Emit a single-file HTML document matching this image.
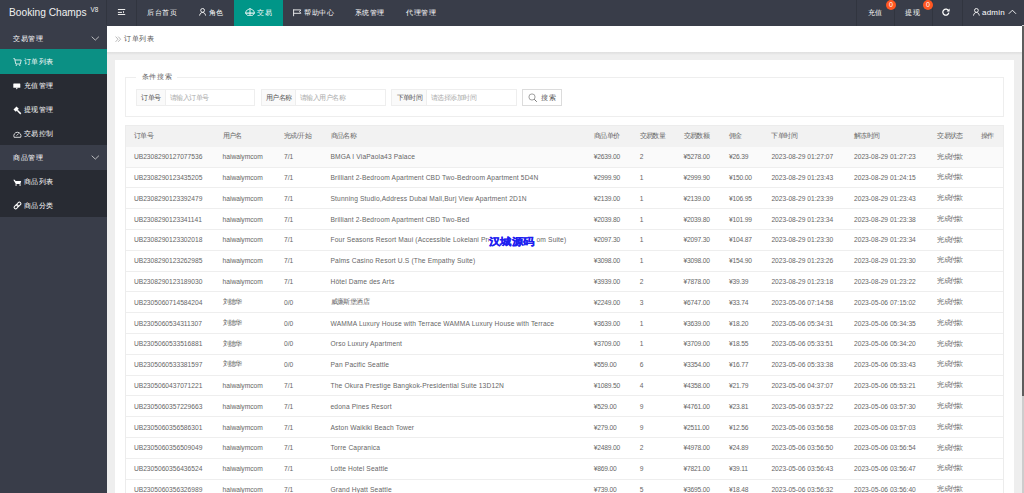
<!DOCTYPE html>
<html><head><meta charset="utf-8"><style>
*{margin:0;padding:0;box-sizing:border-box}
html,body{width:1024px;height:493px;overflow:hidden}
body{position:relative;background:#eeeeee;font-family:"Liberation Sans",sans-serif;}
.a{position:absolute}
.t{position:absolute;white-space:nowrap;line-height:12px;margin-top:-6px}
.hdr{left:0;top:0;width:1024px;height:25.8px;background:#393D49}
.logo{left:9px;top:13.2px;font-size:10.2px;color:#f0f0f0}
.logo sup{font-size:6.4px;position:relative;top:-3.2px;margin-left:3.8px;vertical-align:top}
.vsep{position:absolute;top:0;width:1px;height:25.8px;background:rgba(0,0,0,0.13)}
.nav{font-size:7px;letter-spacing:0.55px;color:#fff;top:13.2px}
.navact{left:234px;top:0;width:49px;height:25.8px;background:#009688}
.badge{position:absolute;width:10px;height:10px;border-radius:50%;background:#FF5722;color:#fff;font-size:7px;line-height:10px;text-align:center}
.side{left:0;top:25px;width:107px;height:468px;background:#393D49}
.child{left:0;width:107px;background:#282B33}
.sact{left:0;top:49px;width:107px;height:24.5px;background:#0b9084}
.sn{font-size:7px;letter-spacing:0.5px;color:#fff}
.crumb{left:107px;top:25.8px;width:915px;height:26px;background:#fff}
.crumbsh{left:107px;top:51.8px;width:915px;height:3px;background:linear-gradient(#e0e0e0,#e3e3e3 40%,#eeeeee)}
.card{left:115px;top:60px;width:899px;height:440px;background:#fff}
.fs{left:125.2px;top:77px;width:878.5px;height:40px;border:1px solid #eeeeee}
.grp{position:absolute;top:89px;height:16.5px;border:1px solid #eeeeee;background:#fff}
.glab{position:absolute;left:0;top:0;bottom:0;background:#fafafa;border-right:1px solid #eeeeee}
.tbl{position:absolute;left:125.2px;width:878.6px;border:1px solid #ececec;background:#fff}
.thead{position:absolute;left:126.2px;width:876.6px;background:#f2f2f2}
.tr{position:absolute;left:126.2px;width:876.6px;border-bottom:1px solid #eeeeee}
.tr.first{background:#fafafa}
.th{position:absolute;white-space:nowrap;font-size:7px;letter-spacing:-0.6px;color:#666;line-height:10px;margin-top:-5px}
.td{position:absolute;white-space:nowrap;font-size:6.67px;color:#666;line-height:10px;margin-top:-5px}
.sb{left:1022px;top:25px;width:2px;height:468px;background:#cdcdcd}
.sbt{left:1022px;top:26px;width:2px;height:370px;background:#5d5d5d}
.wm{background:#fff;transform:scaleY(0.88);left:488.5px;top:240.8px;font-size:11px;letter-spacing:0.6px;font-weight:bold;-webkit-text-stroke:0.4px #1f1ff0;color:#1f1ff0;line-height:14px;margin-top:-7px;white-space:nowrap;position:absolute}

.cj7{font-size:7px;letter-spacing:0.6px}
.lab{font-size:7px;letter-spacing:-0.6px;color:#555}
.ph{font-size:7px;letter-spacing:-0.55px;color:#aaa}
.st{font-size:7px;letter-spacing:-0.6px;position:relative;top:-0.8px}

</style></head><body>
<div class="a hdr"></div>
<div class="t logo">Booking Champs<sup>V8</sup></div>
<div class="vsep" style="left:105.8px"></div>
<div class="vsep" style="left:136px"></div>
<div class="a navact"></div>
<!-- hamburger --><svg class="a" style="left:117px;top:8px" width="10" height="8" viewBox="0 0 10 8"><rect x="0.9" y="1.05" width="7.3" height="0.95" fill="#f4f4f4"/><rect x="0.9" y="3.9" width="4.1" height="0.95" fill="#f4f4f4"/><rect x="6" y="3.1" width="0.9" height="2" fill="#e8e8e8"/><rect x="0.9" y="6.05" width="7.3" height="0.95" fill="#f4f4f4"/></svg>
<div class="t nav" style="left:147px">后台首页</div>
<svg class="a" style="left:198.5px;top:8px" width="8" height="8" viewBox="0 0 8 8"><circle cx="3.6" cy="2.4" r="1.9" fill="none" stroke="#fff" stroke-width="0.9"/><path d="M0.6 7.6 C1 5.3 2.2 4.5 3.6 4.5 C5 4.5 6.2 5.3 6.6 7.6" fill="none" stroke="#fff" stroke-width="0.9"/></svg>
<div class="t nav" style="left:208.5px">角色</div>
<svg class="a" style="left:244.6px;top:8px" width="10" height="8" viewBox="0 0 10 8"><path d="M5 0.5 L8.6 2.6 L9.5 5 L7.6 7.4 H2.4 L0.5 5 L1.4 2.6 Z" fill="none" stroke="#fff" stroke-width="0.8"/><path d="M0.5 5.1 H9.5" stroke="#fff" stroke-width="1.1"/><path d="M5 0.5 V7.4" stroke="#fff" stroke-width="0.9"/></svg>
<div class="t nav" style="left:257px">交易</div>
<svg class="a" style="left:293px;top:8.5px" width="9" height="8" viewBox="0 0 9 8"><path d="M0.6 0.3 V7.2 M0.6 0.9 H7.8 L6.6 2.6 L7.8 4.3 H0.6" fill="none" stroke="#fff" stroke-width="0.85"/></svg>
<div class="t nav" style="left:304px">帮助中心</div>
<div class="t nav" style="left:354.7px">系统管理</div>
<div class="t nav" style="left:406px">代理管理</div>
<div class="vsep" style="left:856px"></div>
<div class="vsep" style="left:894px"></div>
<div class="vsep" style="left:931.5px"></div>
<div class="vsep" style="left:961.5px"></div>
<div class="t nav" style="left:867.5px">充值</div>
<div class="badge" style="left:886px;top:0px">0</div>
<div class="t nav" style="left:905px">提现</div>
<div class="badge" style="left:923px;top:0px">0</div>
<svg class="a" style="left:942px;top:7.9px" width="8" height="8" viewBox="0 0 8 8"><path d="M6.6 3 A3 3 0 1 0 6.8 4.6" fill="none" stroke="#fff" stroke-width="1.3"/><path d="M7.6 0.6 V3.6 H4.6 Z" fill="#fff"/></svg>
<svg class="a" style="left:972.5px;top:8px" width="8" height="8" viewBox="0 0 8 8"><circle cx="3.4" cy="2.4" r="1.9" fill="none" stroke="#fff" stroke-width="0.9"/><path d="M0.5 7.6 C0.9 5.3 2 4.5 3.4 4.5 C4.8 4.5 5.9 5.3 6.3 7.6" fill="none" stroke="#fff" stroke-width="0.9"/></svg>
<div class="t nav" style="left:982px;font-size:8px;letter-spacing:0.2px">admin</div>
<svg class="a" style="left:1008.3px;top:8.8px" width="9" height="6" viewBox="0 0 9 6"><path d="M0.8 4.8 L4.4 1.2 L8 4.8" fill="none" stroke="#fff" stroke-width="0.9"/></svg>

<div class="a side"></div>
<div class="a child" style="top:73px;height:72.3px"></div>
<div class="a child" style="top:169.6px;height:47px"></div>
<div class="a sact"></div>
<div class="t sn" style="left:13.4px;top:38.5px">交易管理</div>
<svg class="a" style="left:91px;top:35.5px" width="9" height="5" viewBox="0 0 9 5"><path d="M0.7 0.7 L4.3 4.1 L7.9 0.7" fill="none" stroke="#ddd" stroke-width="0.8"/></svg>
<div class="t sn" style="left:23.7px;top:62px">订单列表</div>
<div class="t sn" style="left:23.7px;top:86px">充值管理</div>
<div class="t sn" style="left:23.7px;top:110px">提现管理</div>
<div class="t sn" style="left:23.7px;top:134px">交易控制</div>
<div class="t sn" style="left:13.4px;top:158px">商品管理</div>
<svg class="a" style="left:91px;top:155px" width="9" height="5" viewBox="0 0 9 5"><path d="M0.7 0.7 L4.3 4.1 L7.9 0.7" fill="none" stroke="#ddd" stroke-width="0.8"/></svg>
<div class="t sn" style="left:23.7px;top:182px">商品列表</div>
<div class="t sn" style="left:23.7px;top:206px">商品分类</div>
<!-- sidebar icons -->
<svg class="a" style="left:12.5px;top:58px" width="9" height="8" viewBox="0 0 9 8"><path d="M0.4 0.6 H1.6 L2.8 6 H7.3 L8.2 2 H2" fill="none" stroke="#fff" stroke-width="0.8"/><circle cx="3.3" cy="7.2" r="0.6" fill="#fff"/><circle cx="6.8" cy="7.2" r="0.6" fill="#fff"/></svg>
<svg class="a" style="left:13px;top:82.5px" width="8" height="7" viewBox="0 0 8 7"><rect x="0.3" y="0.5" width="7" height="4.3" rx="0.5" fill="#fff"/><path d="M2.8 4.8 L3.8 6.6 L4.8 4.8 Z" fill="#fff"/></svg>
<svg class="a" style="left:12.5px;top:105.5px" width="9" height="9" viewBox="0 0 9 9"><path d="M0.5 3.5 L3.5 0.5 L5.8 2.8 L2.8 5.8 Z" fill="#fff"/><path d="M4.2 4.3 L7.8 7.9" stroke="#fff" stroke-width="1.5"/></svg>
<svg class="a" style="left:12.5px;top:130px" width="9" height="8" viewBox="0 0 9 8"><path d="M1.1 7.3 A3.6 3.6 0 1 1 7.7 7.3 Z" fill="none" stroke="#fff" stroke-width="0.8"/><path d="M3.6 5.6 L5.8 3.4" stroke="#fff" stroke-width="0.8"/></svg>
<svg class="a" style="left:12.5px;top:178.5px" width="9" height="8" viewBox="0 0 9 8"><path d="M0.3 0.7 H1.8 L2.6 2 H8.2 L7.4 5 H2.8 Z" fill="#fff"/><rect x="2.6" y="5" width="0.9" height="2" fill="#fff"/><rect x="6.6" y="5" width="0.9" height="2" fill="#fff"/></svg>
<svg class="a" style="left:12.5px;top:201.3px" width="9" height="9" viewBox="0 0 9 9"><g transform="rotate(-45 4.5 4.5)" fill="none" stroke="#fff" stroke-width="1"><rect x="0.4" y="3" width="4.6" height="3" rx="1.5"/><rect x="4" y="3" width="4.6" height="3" rx="1.5"/></g></svg>

<div class="a crumb"></div><div class="a crumbsh"></div>
<svg class="a" style="left:114.5px;top:36px" width="7" height="7" viewBox="0 0 7 7"><path d="M0.6 0.6 L3 3.2 L0.6 5.8 M3.2 0.6 L5.6 3.2 L3.2 5.8" fill="none" stroke="#999" stroke-width="0.7"/></svg>
<div class="t cj7" style="left:124px;top:38.9px;color:#555">订单列表</div>
<div class="a card"></div>
<div class="a fs"></div>
<div class="a" style="left:136.4px;top:72px;width:40.8px;height:10px;background:#fff"></div>
<div class="t cj7" style="left:141.9px;top:77.2px;color:#666">条件搜索</div>

<div class="grp" style="left:136.4px;width:118.8px"><div class="glab" style="width:29px"></div></div>
<div class="t lab" style="left:141.3px;top:98.1px">订单号</div>
<div class="t ph" style="left:170px;top:98.1px">请输入订单号</div>
<div class="grp" style="left:261.1px;width:124.5px"><div class="glab" style="width:34.4px"></div></div>
<div class="t lab" style="left:265.8px;top:98.1px">用户名称</div>
<div class="t ph" style="left:300px;top:98.1px">请输入用户名称</div>
<div class="grp" style="left:391.4px;width:125.6px"><div class="glab" style="width:35px"></div></div>
<div class="t lab" style="left:396.7px;top:98.1px">下单时间</div>
<div class="t ph" style="left:430.9px;top:98.1px">请选择添加时间</div>
<div class="grp" style="left:522.3px;width:39.8px;border-color:#dcdcdc"></div>
<svg class="a" style="left:528px;top:92.5px" width="10" height="10" viewBox="0 0 10 10"><circle cx="4" cy="4" r="3.1" fill="none" stroke="#888" stroke-width="0.8"/><path d="M6.2 6.2 L8.8 8.8" stroke="#777" stroke-width="1"/></svg>
<div class="t" style="left:541px;top:98px;font-size:7px;color:#555;letter-spacing:1px">搜索</div>

<div class="tbl" style="top:125.40px;height:372.60px"></div>
<div class="thead" style="top:126.40px;height:20.50px"></div>
<div class="th" style="left:133.90px;top:135.75px">订单号</div>
<div class="th" style="left:222.50px;top:135.75px">用户名</div>
<div class="th" style="left:284.00px;top:135.75px">完成/开始</div>
<div class="th" style="left:330.50px;top:135.75px">商品名称</div>
<div class="th" style="left:593.80px;top:135.75px">商品单价</div>
<div class="th" style="left:639.70px;top:135.75px">交易数量</div>
<div class="th" style="left:683.60px;top:135.75px">交易数额</div>
<div class="th" style="left:729.10px;top:135.75px">佣金</div>
<div class="th" style="left:771.40px;top:135.75px">下单时间</div>
<div class="th" style="left:854.00px;top:135.75px">解冻时间</div>
<div class="th" style="left:937.30px;top:135.75px">交易状态</div>
<div class="th" style="left:980.60px;top:135.75px">操作</div>
<div class="tr first" style="top:146.90px;height:20.79px"></div>
<div class="td" style="left:133.90px;top:157.30px">UB2308290127077536</div>
<div class="td" style="left:222.50px;top:157.30px">haiwaiymcom</div>
<div class="td" style="left:284.00px;top:157.30px">7/1</div>
<div class="td" style="left:330.50px;top:157.30px;letter-spacing:0.15px">BMGA I ViaPaola43 Palace</div>
<div class="td" style="left:593.80px;top:157.30px;letter-spacing:-0.2px">¥2639.00</div>
<div class="td" style="left:639.70px;top:157.30px">2</div>
<div class="td" style="left:683.60px;top:157.30px;letter-spacing:-0.2px">¥5278.00</div>
<div class="td" style="left:729.10px;top:157.30px;letter-spacing:-0.2px">¥26.39</div>
<div class="td" style="left:771.40px;top:157.30px">2023-08-29 01:27:07</div>
<div class="td" style="left:854.00px;top:157.30px">2023-08-29 01:27:23</div>
<div class="td" style="left:937.30px;top:157.30px"><span class="st">完成付款</span></div>
<div class="tr" style="top:167.69px;height:20.79px"></div>
<div class="td" style="left:133.90px;top:178.09px">UB2308290123435205</div>
<div class="td" style="left:222.50px;top:178.09px">haiwaiymcom</div>
<div class="td" style="left:284.00px;top:178.09px">7/1</div>
<div class="td" style="left:330.50px;top:178.09px;letter-spacing:0.15px">Brilliant 2-Bedroom Apartment CBD Two-Bedroom Apartment 5D4N</div>
<div class="td" style="left:593.80px;top:178.09px;letter-spacing:-0.2px">¥2999.90</div>
<div class="td" style="left:639.70px;top:178.09px">1</div>
<div class="td" style="left:683.60px;top:178.09px;letter-spacing:-0.2px">¥2999.90</div>
<div class="td" style="left:729.10px;top:178.09px;letter-spacing:-0.2px">¥150.00</div>
<div class="td" style="left:771.40px;top:178.09px">2023-08-29 01:23:43</div>
<div class="td" style="left:854.00px;top:178.09px">2023-08-29 01:24:15</div>
<div class="td" style="left:937.30px;top:178.09px"><span class="st">完成付款</span></div>
<div class="tr" style="top:188.48px;height:20.79px"></div>
<div class="td" style="left:133.90px;top:198.88px">UB2308290123392479</div>
<div class="td" style="left:222.50px;top:198.88px">haiwaiymcom</div>
<div class="td" style="left:284.00px;top:198.88px">7/1</div>
<div class="td" style="left:330.50px;top:198.88px;letter-spacing:0.15px">Stunning Studio,Address Dubai Mall,Burj View Apartment 2D1N</div>
<div class="td" style="left:593.80px;top:198.88px;letter-spacing:-0.2px">¥2139.00</div>
<div class="td" style="left:639.70px;top:198.88px">1</div>
<div class="td" style="left:683.60px;top:198.88px;letter-spacing:-0.2px">¥2139.00</div>
<div class="td" style="left:729.10px;top:198.88px;letter-spacing:-0.2px">¥106.95</div>
<div class="td" style="left:771.40px;top:198.88px">2023-08-29 01:23:39</div>
<div class="td" style="left:854.00px;top:198.88px">2023-08-29 01:23:43</div>
<div class="td" style="left:937.30px;top:198.88px"><span class="st">完成付款</span></div>
<div class="tr" style="top:209.27px;height:20.79px"></div>
<div class="td" style="left:133.90px;top:219.66px">UB2308290123341141</div>
<div class="td" style="left:222.50px;top:219.66px">haiwaiymcom</div>
<div class="td" style="left:284.00px;top:219.66px">7/1</div>
<div class="td" style="left:330.50px;top:219.66px;letter-spacing:0.15px">Brilliant 2-Bedroom Apartment CBD Two-Bed</div>
<div class="td" style="left:593.80px;top:219.66px;letter-spacing:-0.2px">¥2039.80</div>
<div class="td" style="left:639.70px;top:219.66px">1</div>
<div class="td" style="left:683.60px;top:219.66px;letter-spacing:-0.2px">¥2039.80</div>
<div class="td" style="left:729.10px;top:219.66px;letter-spacing:-0.2px">¥101.99</div>
<div class="td" style="left:771.40px;top:219.66px">2023-08-29 01:23:34</div>
<div class="td" style="left:854.00px;top:219.66px">2023-08-29 01:23:38</div>
<div class="td" style="left:937.30px;top:219.66px"><span class="st">完成付款</span></div>
<div class="tr" style="top:230.06px;height:20.79px"></div>
<div class="td" style="left:133.90px;top:240.45px">UB2308290123302018</div>
<div class="td" style="left:222.50px;top:240.45px">haiwaiymcom</div>
<div class="td" style="left:284.00px;top:240.45px">7/1</div>
<div class="td" style="left:330.50px;top:240.45px;letter-spacing:0.15px">Four Seasons Resort Maui (Accessible Lokelani Presi</div>
<div class="td" style="left:593.80px;top:240.45px;letter-spacing:-0.2px">¥2097.30</div>
<div class="td" style="left:639.70px;top:240.45px">1</div>
<div class="td" style="left:683.60px;top:240.45px;letter-spacing:-0.2px">¥2097.30</div>
<div class="td" style="left:729.10px;top:240.45px;letter-spacing:-0.2px">¥104.87</div>
<div class="td" style="left:771.40px;top:240.45px">2023-08-29 01:23:30</div>
<div class="td" style="left:854.00px;top:240.45px">2023-08-29 01:23:34</div>
<div class="td" style="left:937.30px;top:240.45px"><span class="st">完成付款</span></div>
<div class="tr" style="top:250.85px;height:20.79px"></div>
<div class="td" style="left:133.90px;top:261.24px">UB2308290123262985</div>
<div class="td" style="left:222.50px;top:261.24px">haiwaiymcom</div>
<div class="td" style="left:284.00px;top:261.24px">7/1</div>
<div class="td" style="left:330.50px;top:261.24px;letter-spacing:0.15px">Palms Casino Resort U.S (The Empathy Suite)</div>
<div class="td" style="left:593.80px;top:261.24px;letter-spacing:-0.2px">¥3098.00</div>
<div class="td" style="left:639.70px;top:261.24px">1</div>
<div class="td" style="left:683.60px;top:261.24px;letter-spacing:-0.2px">¥3098.00</div>
<div class="td" style="left:729.10px;top:261.24px;letter-spacing:-0.2px">¥154.90</div>
<div class="td" style="left:771.40px;top:261.24px">2023-08-29 01:23:26</div>
<div class="td" style="left:854.00px;top:261.24px">2023-08-29 01:23:30</div>
<div class="td" style="left:937.30px;top:261.24px"><span class="st">完成付款</span></div>
<div class="tr" style="top:271.64px;height:20.79px"></div>
<div class="td" style="left:133.90px;top:282.03px">UB2308290123189030</div>
<div class="td" style="left:222.50px;top:282.03px">haiwaiymcom</div>
<div class="td" style="left:284.00px;top:282.03px">7/1</div>
<div class="td" style="left:330.50px;top:282.03px;letter-spacing:0.15px">Hôtel Dame des Arts</div>
<div class="td" style="left:593.80px;top:282.03px;letter-spacing:-0.2px">¥3939.00</div>
<div class="td" style="left:639.70px;top:282.03px">2</div>
<div class="td" style="left:683.60px;top:282.03px;letter-spacing:-0.2px">¥7878.00</div>
<div class="td" style="left:729.10px;top:282.03px;letter-spacing:-0.2px">¥39.39</div>
<div class="td" style="left:771.40px;top:282.03px">2023-08-29 01:23:18</div>
<div class="td" style="left:854.00px;top:282.03px">2023-08-29 01:23:22</div>
<div class="td" style="left:937.30px;top:282.03px"><span class="st">完成付款</span></div>
<div class="tr" style="top:292.43px;height:20.79px"></div>
<div class="td" style="left:133.90px;top:302.82px">UB2305060714584204</div>
<div class="td" style="left:222.50px;top:302.82px"><span class="st">刘德华</span></div>
<div class="td" style="left:284.00px;top:302.82px">0/0</div>
<div class="td" style="left:330.50px;top:302.82px;letter-spacing:0.15px"><span class="st">威廉斯堡酒店</span></div>
<div class="td" style="left:593.80px;top:302.82px;letter-spacing:-0.2px">¥2249.00</div>
<div class="td" style="left:639.70px;top:302.82px">3</div>
<div class="td" style="left:683.60px;top:302.82px;letter-spacing:-0.2px">¥6747.00</div>
<div class="td" style="left:729.10px;top:302.82px;letter-spacing:-0.2px">¥33.74</div>
<div class="td" style="left:771.40px;top:302.82px">2023-05-06 07:14:58</div>
<div class="td" style="left:854.00px;top:302.82px">2023-05-06 07:15:02</div>
<div class="td" style="left:937.30px;top:302.82px"><span class="st">完成付款</span></div>
<div class="tr" style="top:313.22px;height:20.79px"></div>
<div class="td" style="left:133.90px;top:323.62px">UB2305060534311307</div>
<div class="td" style="left:222.50px;top:323.62px"><span class="st">刘德华</span></div>
<div class="td" style="left:284.00px;top:323.62px">0/0</div>
<div class="td" style="left:330.50px;top:323.62px;letter-spacing:0.15px">WAMMA Luxury House with Terrace WAMMA Luxury House with Terrace</div>
<div class="td" style="left:593.80px;top:323.62px;letter-spacing:-0.2px">¥3639.00</div>
<div class="td" style="left:639.70px;top:323.62px">1</div>
<div class="td" style="left:683.60px;top:323.62px;letter-spacing:-0.2px">¥3639.00</div>
<div class="td" style="left:729.10px;top:323.62px;letter-spacing:-0.2px">¥18.20</div>
<div class="td" style="left:771.40px;top:323.62px">2023-05-06 05:34:31</div>
<div class="td" style="left:854.00px;top:323.62px">2023-05-06 05:34:35</div>
<div class="td" style="left:937.30px;top:323.62px"><span class="st">完成付款</span></div>
<div class="tr" style="top:334.01px;height:20.79px"></div>
<div class="td" style="left:133.90px;top:344.41px">UB2305060533516881</div>
<div class="td" style="left:222.50px;top:344.41px"><span class="st">刘德华</span></div>
<div class="td" style="left:284.00px;top:344.41px">0/0</div>
<div class="td" style="left:330.50px;top:344.41px;letter-spacing:0.15px">Orso Luxury Apartment</div>
<div class="td" style="left:593.80px;top:344.41px;letter-spacing:-0.2px">¥3709.00</div>
<div class="td" style="left:639.70px;top:344.41px">1</div>
<div class="td" style="left:683.60px;top:344.41px;letter-spacing:-0.2px">¥3709.00</div>
<div class="td" style="left:729.10px;top:344.41px;letter-spacing:-0.2px">¥18.55</div>
<div class="td" style="left:771.40px;top:344.41px">2023-05-06 05:33:51</div>
<div class="td" style="left:854.00px;top:344.41px">2023-05-06 05:34:20</div>
<div class="td" style="left:937.30px;top:344.41px"><span class="st">完成付款</span></div>
<div class="tr" style="top:354.80px;height:20.79px"></div>
<div class="td" style="left:133.90px;top:365.20px">UB2305060533381597</div>
<div class="td" style="left:222.50px;top:365.20px"><span class="st">刘德华</span></div>
<div class="td" style="left:284.00px;top:365.20px">0/0</div>
<div class="td" style="left:330.50px;top:365.20px;letter-spacing:0.15px">Pan Pacific Seattle</div>
<div class="td" style="left:593.80px;top:365.20px;letter-spacing:-0.2px">¥559.00</div>
<div class="td" style="left:639.70px;top:365.20px">6</div>
<div class="td" style="left:683.60px;top:365.20px;letter-spacing:-0.2px">¥3354.00</div>
<div class="td" style="left:729.10px;top:365.20px;letter-spacing:-0.2px">¥16.77</div>
<div class="td" style="left:771.40px;top:365.20px">2023-05-06 05:33:38</div>
<div class="td" style="left:854.00px;top:365.20px">2023-05-06 05:33:43</div>
<div class="td" style="left:937.30px;top:365.20px"><span class="st">完成付款</span></div>
<div class="tr" style="top:375.59px;height:20.79px"></div>
<div class="td" style="left:133.90px;top:385.99px">UB2305060437071221</div>
<div class="td" style="left:222.50px;top:385.99px">haiwaiymcom</div>
<div class="td" style="left:284.00px;top:385.99px">7/1</div>
<div class="td" style="left:330.50px;top:385.99px;letter-spacing:0.15px">The Okura Prestige Bangkok-Presidential Suite 13D12N</div>
<div class="td" style="left:593.80px;top:385.99px;letter-spacing:-0.2px">¥1089.50</div>
<div class="td" style="left:639.70px;top:385.99px">4</div>
<div class="td" style="left:683.60px;top:385.99px;letter-spacing:-0.2px">¥4358.00</div>
<div class="td" style="left:729.10px;top:385.99px;letter-spacing:-0.2px">¥21.79</div>
<div class="td" style="left:771.40px;top:385.99px">2023-05-06 04:37:07</div>
<div class="td" style="left:854.00px;top:385.99px">2023-05-06 05:53:21</div>
<div class="td" style="left:937.30px;top:385.99px"><span class="st">完成付款</span></div>
<div class="tr" style="top:396.38px;height:20.79px"></div>
<div class="td" style="left:133.90px;top:406.78px">UB2305060357229663</div>
<div class="td" style="left:222.50px;top:406.78px">haiwaiymcom</div>
<div class="td" style="left:284.00px;top:406.78px">7/1</div>
<div class="td" style="left:330.50px;top:406.78px;letter-spacing:0.15px">edona Pines Resort</div>
<div class="td" style="left:593.80px;top:406.78px;letter-spacing:-0.2px">¥529.00</div>
<div class="td" style="left:639.70px;top:406.78px">9</div>
<div class="td" style="left:683.60px;top:406.78px;letter-spacing:-0.2px">¥4761.00</div>
<div class="td" style="left:729.10px;top:406.78px;letter-spacing:-0.2px">¥23.81</div>
<div class="td" style="left:771.40px;top:406.78px">2023-05-06 03:57:22</div>
<div class="td" style="left:854.00px;top:406.78px">2023-05-06 03:57:30</div>
<div class="td" style="left:937.30px;top:406.78px"><span class="st">完成付款</span></div>
<div class="tr" style="top:417.17px;height:20.79px"></div>
<div class="td" style="left:133.90px;top:427.57px">UB2305060356586301</div>
<div class="td" style="left:222.50px;top:427.57px">haiwaiymcom</div>
<div class="td" style="left:284.00px;top:427.57px">7/1</div>
<div class="td" style="left:330.50px;top:427.57px;letter-spacing:0.15px">Aston Waikiki Beach Tower</div>
<div class="td" style="left:593.80px;top:427.57px;letter-spacing:-0.2px">¥279.00</div>
<div class="td" style="left:639.70px;top:427.57px">9</div>
<div class="td" style="left:683.60px;top:427.57px;letter-spacing:-0.2px">¥2511.00</div>
<div class="td" style="left:729.10px;top:427.57px;letter-spacing:-0.2px">¥12.56</div>
<div class="td" style="left:771.40px;top:427.57px">2023-05-06 03:56:58</div>
<div class="td" style="left:854.00px;top:427.57px">2023-05-06 03:57:03</div>
<div class="td" style="left:937.30px;top:427.57px"><span class="st">完成付款</span></div>
<div class="tr" style="top:437.96px;height:20.79px"></div>
<div class="td" style="left:133.90px;top:448.36px">UB2305060356509049</div>
<div class="td" style="left:222.50px;top:448.36px">haiwaiymcom</div>
<div class="td" style="left:284.00px;top:448.36px">7/1</div>
<div class="td" style="left:330.50px;top:448.36px;letter-spacing:0.15px">Torre Capranica</div>
<div class="td" style="left:593.80px;top:448.36px;letter-spacing:-0.2px">¥2489.00</div>
<div class="td" style="left:639.70px;top:448.36px">2</div>
<div class="td" style="left:683.60px;top:448.36px;letter-spacing:-0.2px">¥4978.00</div>
<div class="td" style="left:729.10px;top:448.36px;letter-spacing:-0.2px">¥24.89</div>
<div class="td" style="left:771.40px;top:448.36px">2023-05-06 03:56:50</div>
<div class="td" style="left:854.00px;top:448.36px">2023-05-06 03:56:54</div>
<div class="td" style="left:937.30px;top:448.36px"><span class="st">完成付款</span></div>
<div class="tr" style="top:458.75px;height:20.79px"></div>
<div class="td" style="left:133.90px;top:469.15px">UB2305060356436524</div>
<div class="td" style="left:222.50px;top:469.15px">haiwaiymcom</div>
<div class="td" style="left:284.00px;top:469.15px">7/1</div>
<div class="td" style="left:330.50px;top:469.15px;letter-spacing:0.15px">Lotte Hotel Seattle</div>
<div class="td" style="left:593.80px;top:469.15px;letter-spacing:-0.2px">¥869.00</div>
<div class="td" style="left:639.70px;top:469.15px">9</div>
<div class="td" style="left:683.60px;top:469.15px;letter-spacing:-0.2px">¥7821.00</div>
<div class="td" style="left:729.10px;top:469.15px;letter-spacing:-0.2px">¥39.11</div>
<div class="td" style="left:771.40px;top:469.15px">2023-05-06 03:56:43</div>
<div class="td" style="left:854.00px;top:469.15px">2023-05-06 03:56:47</div>
<div class="td" style="left:937.30px;top:469.15px"><span class="st">完成付款</span></div>
<div class="tr" style="top:479.54px;height:20.79px"></div>
<div class="td" style="left:133.90px;top:489.94px">UB2305060356326989</div>
<div class="td" style="left:222.50px;top:489.94px">haiwaiymcom</div>
<div class="td" style="left:284.00px;top:489.94px">7/1</div>
<div class="td" style="left:330.50px;top:489.94px;letter-spacing:0.15px">Grand Hyatt Seattle</div>
<div class="td" style="left:593.80px;top:489.94px;letter-spacing:-0.2px">¥739.00</div>
<div class="td" style="left:639.70px;top:489.94px">5</div>
<div class="td" style="left:683.60px;top:489.94px;letter-spacing:-0.2px">¥3695.00</div>
<div class="td" style="left:729.10px;top:489.94px;letter-spacing:-0.2px">¥18.48</div>
<div class="td" style="left:771.40px;top:489.94px">2023-05-06 03:56:32</div>
<div class="td" style="left:854.00px;top:489.94px">2023-05-06 03:56:40</div>
<div class="td" style="left:937.30px;top:489.94px"><span class="st">完成付款</span></div>
<div class="td" style="left:536.5px;top:240.45px;letter-spacing:0.15px">om Suite)</div>

<div class="wm">汉城源码</div>
<div class="a sb"></div>
<div class="a sbt"></div>

</body></html>
